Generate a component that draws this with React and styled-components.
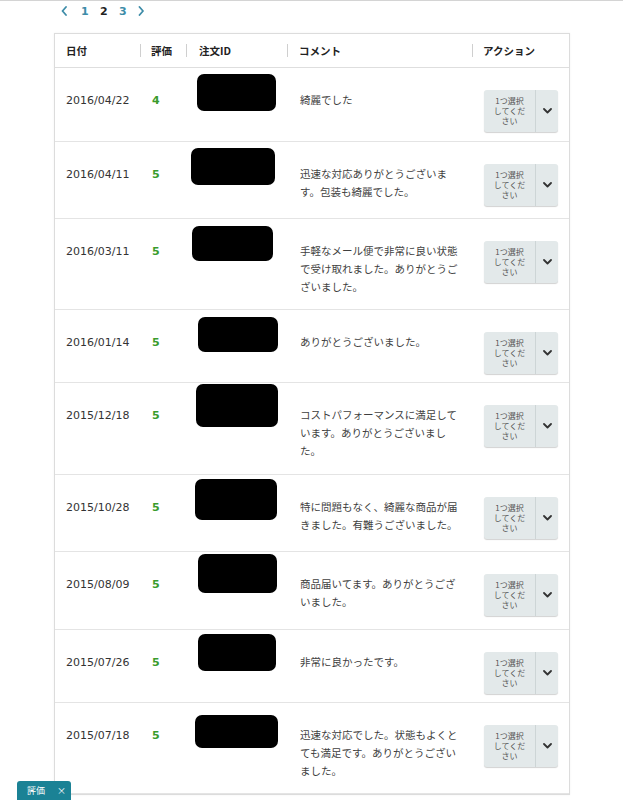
import React from 'react';
import styled, { createGlobalStyle } from 'styled-components';

const GlobalStyle = createGlobalStyle`
  html, body {
    margin: 0;
    padding: 0;
    background: #ffffff;
  }
  body {
    font-family: "DejaVu Sans", "Noto Sans CJK JP", sans-serif;
    color: #333333;
  }
`;

/*** Style ***/

const Page = styled.div`
  border-top: 1px solid #d4d4d4;
  width: 623px;
  height: 800px;
  overflow: hidden;
  position: relative;
  box-sizing: border-box;
`;

const Pager = styled.div`
  display: flex;
  align-items: center;
  height: 20px;
  padding-left: 61px;
`;

const PageArrow = styled.span`
  display: flex;
  align-items: center;
  justify-content: center;
  width: 7px;
  margin-right: ${(p) => (p.$left ? '13px' : '0')};
`;

const PageNum = styled.span`
  width: 19px;
  font-size: 11px;
  font-weight: bold;
  color: ${(p) => (p.$active ? '#222222' : '#3d8ca8')};
`;

const Card = styled.div`
  margin: 12px 0 0 54px;
  width: 516px;
  border: 1px solid #dcdcdc;
  box-shadow: 0 0 2px rgba(0, 0, 0, 0.06);
  box-sizing: border-box;
`;

const Grid = styled.div`
  display: grid;
  grid-template-columns: 85px 46px 101px 185px 1fr;
`;

const HeadRow = styled(Grid)`
  height: 33px;
  border-bottom: 1px solid #dedede;
  align-items: center;
`;

const HeadCell = styled.div`
  position: relative;
  padding-left: ${(p) => p.$pad || 11}px;
  font-size: 10.5px;
  font-weight: bold;
  color: #222222;
  font-family: "Noto Sans CJK JP", "DejaVu Sans", sans-serif;

  ${(p) =>
    p.$sep &&
    `&::before {
      content: '';
      position: absolute;
      left: 0;
      top: 1px;
      height: 13px;
      border-left: 1px solid #cfcfcf;
    }`}
`;

const Row = styled(Grid)`
  height: ${(p) => p.$h}px;
  border-bottom: 1px solid #e4e4e4;
  box-sizing: border-box;
  align-items: start;
`;

const DateCell = styled.div`
  padding: 24px 0 0 11px;
  font-size: 11px;
  line-height: 18px;
  color: #333333;
`;

const Rating = styled.div`
  padding: 24px 0 0 12px;
  font-size: 11px;
  line-height: 18px;
  font-weight: bold;
  color: #3a9b2c;
`;

const IdCell = styled.div`
  padding-top: ${(p) => p.$top}px;
  padding-left: ${(p) => p.$left}px;
`;

const Redacted = styled.div`
  width: ${(p) => p.$w}px;
  height: ${(p) => p.$hh}px;
  background: #000000;
  border-radius: 7px;
  filter: blur(0.7px);
`;

const Comment = styled.div`
  padding: 23px 0 0 13px;
  width: 164px;
  font-family: "Noto Sans CJK JP", "DejaVu Sans", sans-serif;
  font-size: 10.5px;
  line-height: 18px;
  color: #3f3f3f;
`;

const ActionCell = styled.div`
  padding: 22px 0 0 12px;
`;

const Select = styled.div`
  display: flex;
  width: 74px;
  height: 42px;
  background: #e3e9ea;
  border-radius: 3px;
  box-shadow: 0 1px 1px rgba(0, 0, 0, 0.18);
`;

const SelectLabel = styled.div`
  width: 51px;
  border-right: 1px solid #cdd5d6;
  display: flex;
  flex-direction: column;
  align-items: center;
  justify-content: center;
  font-family: "Noto Sans CJK JP", "DejaVu Sans", sans-serif;
  color: #555555;
`;

const LabelLine = styled.span`
  display: block;
  height: 10px;
  font-size: 8px;
  line-height: 10px;
  white-space: nowrap;
`;

const SelectArrow = styled.div`
  flex: 1;
  display: flex;
  align-items: center;
  justify-content: center;
`;

const Badge = styled.div`
  position: absolute;
  left: 17px;
  bottom: 0;
  width: 54px;
  height: 19px;
  background: #1b8295;
  border-radius: 3px 3px 0 0;
  display: flex;
  align-items: center;
  justify-content: space-between;
  padding: 0 5px 0 10px;
  box-sizing: border-box;
  color: #ffffff;
  font-family: "Noto Sans CJK JP", "DejaVu Sans", sans-serif;
  font-size: 9px;
`;

const Chevron = ({ dir, color = '#3d8ca8' }) => {
  const pts = {
    left: '5,1 1.5,5 5,9',
    right: '1.5,1 5,5 1.5,9',
    down: '1,2 4.5,5.5 8,2',
  }[dir];
  const isDown = dir === 'down';
  return (
    <svg width={isDown ? 9 : 7} height={isDown ? 8 : 10} viewBox={isDown ? '0 0 9 8' : '0 0 7 10'}>
      <polyline points={pts} fill="none" stroke={color} strokeWidth="1.8" strokeLinecap="round" strokeLinejoin="round" />
    </svg>
  );
};

const rows = [
  { date: '2016/04/22', r: 4, h: 74, id: { top: 6, left: 11, w: 79, hh: 37 }, c: '綺麗でした' },
  { date: '2016/04/11', r: 5, h: 77, id: { top: 6, left: 5, w: 84, hh: 37 }, c: '迅速な対応ありがとうございます。包装も綺麗でした。' },
  { date: '2016/03/11', r: 5, h: 91, id: { top: 7, left: 6, w: 81, hh: 35 }, c: '手軽なメール便で非常に良い状態で受け取れました。ありがとうございました。' },
  { date: '2016/01/14', r: 5, h: 73, id: { top: 7, left: 12, w: 80, hh: 35 }, c: 'ありがとうございました。' },
  { date: '2015/12/18', r: 5, h: 92, id: { top: 1, left: 10, w: 82, hh: 43 }, c: 'コストパフォーマンスに満足しています。ありがとうございました。' },
  { date: '2015/10/28', r: 5, h: 77, id: { top: 4, left: 9, w: 82, hh: 41 }, c: '特に問題もなく、綺麗な商品が届きました。有難うございました。' },
  { date: '2015/08/09', r: 5, h: 78, id: { top: 2, left: 12, w: 79, hh: 39 }, c: '商品届いてます。ありがとうございました。' },
  { date: '2015/07/26', r: 5, h: 73, id: { top: 4, left: 12, w: 78, hh: 37 }, c: '非常に良かったです。' },
  { date: '2015/07/18', r: 5, h: 91, id: { top: 12, left: 9, w: 83, hh: 33 }, c: '迅速な対応でした。状態もよくとても満足です。ありがとうございました。' },
];

const App = () => {
  return (
    <>
      <GlobalStyle />
      <Page>
        <Pager>
          <PageArrow $left>
            <Chevron dir="left" />
          </PageArrow>
          <PageNum>1</PageNum>
          <PageNum $active>2</PageNum>
          <PageNum>3</PageNum>
          <PageArrow>
            <Chevron dir="right" />
          </PageArrow>
        </Pager>

        <Card>
          <HeadRow>
            <HeadCell>日付</HeadCell>
            <HeadCell $sep>評価</HeadCell>
            <HeadCell $sep $pad={13}>注文ID</HeadCell>
            <HeadCell $sep $pad={12}>コメント</HeadCell>
            <HeadCell $sep>アクション</HeadCell>
          </HeadRow>

          {rows.map((row) => (
            <Row key={row.date} $h={row.h}>
              <DateCell>{row.date}</DateCell>
              <Rating>{row.r}</Rating>
              <IdCell $top={row.id.top} $left={row.id.left}>
                <Redacted $w={row.id.w} $hh={row.id.hh} />
              </IdCell>
              <Comment>{row.c}</Comment>
              <ActionCell>
                <Select>
                  <SelectLabel>
                    <LabelLine>1つ選択</LabelLine>
                    <LabelLine>してくだ</LabelLine>
                    <LabelLine>さい</LabelLine>
                  </SelectLabel>
                  <SelectArrow>
                    <Chevron dir="down" color="#333333" />
                  </SelectArrow>
                </Select>
              </ActionCell>
            </Row>
          ))}
        </Card>

        <Badge>
          <span>評価</span>
          <span>×</span>
        </Badge>
      </Page>
    </>
  );
};

export default App;
